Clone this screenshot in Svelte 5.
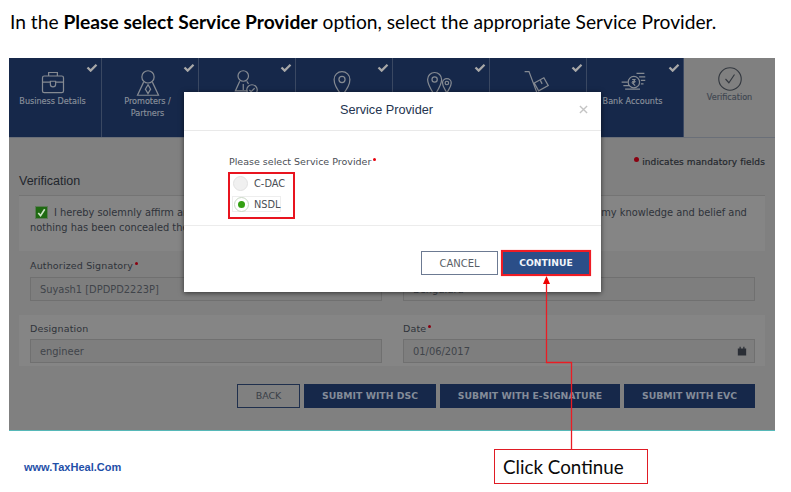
<script>
  const done = [
    { label: ['Business Details'], icon: 'case' },
    { label: ['Promoters /', 'Partners'], icon: 'person' },
    { label: [], icon: 'sign' },
    { label: [], icon: 'pin' },
    { label: [], icon: 'pins' },
    { label: [], icon: 'cart' },
    { label: ['Bank Accounts'], icon: 'bank' }
  ];
</script>

<div class="page">
  <p class="intro">In the <b>Please select Service Provider</b> option, select the appropriate Service Provider.</p>

  <div class="shot">
    <nav class="tabs">
      {#each done as t}
        <div class="tab">
          <svg class="tick" viewBox="0 0 12 10"><path d="M1 5l3.5 3.5L11 2" /></svg>
          <svg class="ico" viewBox="0 0 32 32">
            {#if t.icon === 'case'}
              <rect x="4" y="8" width="24" height="19" rx="2" />
              <path d="M11 8V4h10v4M4 15h9M19 15h9M13 14h6v3.500a3 3 0 0 1-6 0z" />
            {:else if t.icon === 'person'}
              <circle cx="16" cy="9" r="7" />
              <path d="M11 15L4 30h24l-7-15M16 18l-3 5 3 5 3-5z" />
            {:else if t.icon === 'sign'}
              <circle cx="14" cy="8" r="6" />
              <path d="M10 14L5 25h14M18 14l2 3M14 17v7" />
              <circle cx="24" cy="24" r="6" />
              <path d="M21 24l2 2 4-4" />
            {:else if t.icon === 'pin'}
              <path d="M16 31C10 22 7 18 7 12a9 9 0 0 1 18 0c0 6-3 10-9 19z" />
              <circle cx="16" cy="12" r="3.500" />
            {:else if t.icon === 'pins'}
              <path d="M11 30C6 22 3 18 3 12a8 8 0 0 1 16 0c0 6-3 10-8 18zM25 27c-3-5-5-7-5-11a5 5 0 0 1 10 0c0 4-2 6-5 11z" />
              <circle cx="11" cy="12" r="3" /><circle cx="25" cy="16" r="2" />
            {:else if t.icon === 'cart'}
              <path d="M3 3h5l9 24M14 16l11-6 5 9-11 6zM21 13l2 4" />
              <circle cx="18" cy="29" r="2" />
            {:else}
              <circle cx="17" cy="15" r="6.500" />
              <path d="M15 12h4M15 14.500h4M15.500 12c3 0 3 4 0 4l3 3M3 15h7M5 19h7M7 23h17M23 9h7M25 13h5M25 17h3M20 5h9" />
            {/if}
          </svg>
          <span class="tlabel">{#each t.label as l}<span>{l}</span>{/each}</span>
        </div>
      {/each}
      <div class="tab current">
        <svg class="ico big" viewBox="0 0 32 32">
          <circle cx="16" cy="16" r="15" />
          <path d="M10 16l4.500 5L22 10" />
        </svg>
        <span class="tlabel">Verification</span>
      </div>
    </nav>

    <div class="mand"><i></i>indicates mandatory fields</div>
    <h2>Verification</h2>

    <div class="declare">
      <div class="line"><span class="check"><svg viewBox="0 0 12 12"><path d="M2.500 6.500l2.500 3L9.500 2.500" /></svg></span><span>I hereby solemnly affirm and declare that the information given herein above is true and correct to the best of my knowledge and belief and</span></div>
      <div class="line2">nothing has been concealed therefrom.</div>
    </div>

    <div class="row plain">
      <div class="field"><label>Authorized Signatory<i></i></label><div class="input">Suyash1 [DPDPD2223P]</div></div>
      <div class="field"><label>Place<i></i></label><div class="input">Bengaluru</div></div>
    </div>
    <div class="row">
      <div class="field"><label>Designation</label><div class="input">engineer</div></div>
      <div class="field"><label>Date<i></i></label><div class="input">01/06/2017
        <svg class="cal" viewBox="0 0 12 12"><path d="M1 3h10v8.500H1zM3 1h1.500v2H3zM7.500 1H9v2H7.500z" /></svg></div></div>
    </div>

    <div class="actions">
      <span class="btn back">BACK</span>
      <span class="btn dsc">SUBMIT WITH DSC</span>
      <span class="btn esign">SUBMIT WITH E-SIGNATURE</span>
      <span class="btn evc">SUBMIT WITH EVC</span>
    </div>

    <div class="modal">
      <header><span>Service Provider</span><svg class="close" viewBox="0 0 10 10"><path d="M1 1l8 8M9 1l-8 8" /></svg></header>
      <div class="mbody">
        <div class="q">Please select Service Provider<i></i></div>
        <div class="opt"><span class="radio"></span>C-DAC</div>
        <div class="opt on"><span class="radio"><em></em></span>NSDL</div>
      </div>
      <footer>
        <span class="cancel">CANCEL</span>
        <span class="continue">CONTINUE</span>
      </footer>
    </div>
  </div>

  <div class="bottom">
    <a class="brand" href="#top">www.TaxHeal.Com</a>
    <div class="callout">Click Continue</div>
  </div>

  <div class="redbox"></div>
  <svg class="arrow" width="791" height="492" viewBox="0 0 791 492">
    <path d="M571.500 449V362.500H546.500V282" />
    <path class="head" d="M546.500 276l-3.500 8h7z" />
  </svg>
</div>

<style>
  :global(body) { margin: 0; background: #fff; }
  .page {
    position: relative; width: 791px; height: 492px; overflow: hidden;
    font-family: "DejaVu Sans", sans-serif; font-size: 10px; color: #2f333a;
  }
  .intro {
    margin: 0; height: 58px; box-sizing: border-box; padding: 9px 0 0 10px;
    font: 19.2px/26px Lato, "Open Sans", sans-serif; color: #000; white-space: nowrap;
  }
  .shot {
    position: relative; margin-left: 9px; width: 766px; height: 372px;
    background: #808080; border-bottom: 1px solid #56b8b8; box-sizing: content-box;
  }
  .tabs { display: flex; height: 79px; border-bottom: 1px solid #6a6f78; }
  .tab {
    position: relative; width: 97px; flex: none; box-sizing: border-box; background: #16284a;
    border-right: 1px solid #3a4862; display: flex; flex-direction: column; align-items: center;
    padding: 11px 5px 0 0; color: #8a919c; font-size: 8.100px;
  }
  .tab:first-child { width: 93px; }
  .tab .tick { position: absolute; top: 5px; right: 3px; width: 12px; height: 9px; fill: none; stroke: #a8a8a8; stroke-width: 2.500; }
  .ico { width: 28px; height: 28px; margin-bottom: -2px; fill: none; stroke: #858a92; stroke-width: 1.400; flex: none; }
  .tlabel { display: flex; flex-direction: column; align-items: center; line-height: 12px; white-space: nowrap; -webkit-text-stroke: .15px currentColor; }
  .tab.current { flex: 1; background: #808080; border-right: 0; color: #3f4650; padding: 9px 0 0; }
  .ico.big { width: 24px; height: 24px; margin-bottom: 0; stroke: #33383f; stroke-width: 1.500; }
  .mand { position: absolute; top: 99px; right: 10px; font-size: 9px; color: #23272d; white-space: nowrap; letter-spacing: .12px; -webkit-text-stroke: .2px #23272d; }
  .mand i { display: inline-block; width: 5px; height: 5px; border-radius: 50%; background: #8a0010; margin-right: 3px; vertical-align: 3px; }
  h2 {
    margin: 0 10px; padding: 35px 0 6px; height: 16px; box-sizing: content-box;
    font: 400 12.500px/16px "Liberation Sans", sans-serif; color: #22262d; border-bottom: 1px solid #747474;
  }
  .declare { margin: 0 10px; padding: 9px 11px 0; height: 46px; background: #858585; font-size: 9.850px; line-height: 15px; white-space: nowrap; overflow: hidden; }
  .line { display: flex; align-items: center; gap: 6px; padding-left: 5px; height: 15px; }
  .check { width: 11px; height: 11px; flex: none; background: #1f6a12; border: 1px solid #5d7a58; }
  .check svg { display: block; fill: none; stroke: #cfe6c8; stroke-width: 1.800; }
  .row { display: flex; gap: 21px; margin: 0 10px; background: #858585; }
  .row.plain { background: none; margin-top: 7px; height: 56px; padding: 1px 10px 0 11px; }
  .row.plain .input { margin-top: 4px; }
  .row:not(.plain) { height: 44px; padding: 7px 10px 0 11px; }
  .field { flex: 1; min-width: 0; }
  label { display: block; height: 14px; line-height: 14px; font-size: 9.500px; color: #2f333a; letter-spacing: .15px; }
  label i, .q i { display: inline-block; width: 3px; height: 3px; border-radius: 50%; background: #8a0010; margin-left: 2px; vertical-align: 4px; }
  .q i { background: #e8000c; }
  .input {
    position: relative; height: 24px; box-sizing: border-box; border: 1px solid #707070; background: #7e7e7e;
    margin-top: 3px; padding-left: 9px; line-height: 23px; color: #40444a; font-size: 9.900px;
  }
  .cal { position: absolute; right: 7px; top: 6px; width: 10px; height: 10px; fill: #2a2e35; }
  .actions { display: flex; justify-content: flex-end; gap: 4px; margin: 18px 20px 0 0; }
  .btn {
    height: 24px; box-sizing: border-box; line-height: 24px; text-align: center; background: #16284a;
    color: #848c99; font-size: 9.300px; font-weight: 700;
  }
  .back { width: 63px; background: none; border: 1px solid #1f2f4d; line-height: 22px; color: #3a3f47; font-weight: 400; font-size: 9.500px; }
  .dsc { width: 132px; }
  .esign { width: 180px; }
  .evc { width: 131px; }
  .modal {
    position: absolute; left: 175px; top: 34px; width: 417px; height: 200px;
    background: #fff; box-shadow: 0 1px 5px rgba(0,0,0,.6); display: flex; flex-direction: column;
  }
  header {
    position: relative; height: 38px; border-bottom: 1px solid #e9e9e9; text-align: center; padding-right: 12px;
    font: 12.700px/36px "Liberation Sans", sans-serif; color: #24344f;
  }
  .close { position: absolute; right: 13px; top: 13px; width: 9px; height: 9px; fill: none; stroke: #c4c4c4; stroke-width: 1.500; }
  .mbody { height: 95px; box-sizing: border-box; padding: 25px 0 0 45px; border-bottom: 1px solid #ececec; color: #4a4e55; font-size: 9.500px; }
  .q { height: 16px; line-height: 12px; }
  .opt { display: flex; align-items: center; gap: 6px; height: 22px; margin-left: 4px; font-size: 9.800px; }
  .opt.on { width: 49px; height: 16px; margin-top: 2px; margin-left: 3px; padding-left: 1px; gap: 5px; box-sizing: border-box; border: 1px solid #eee; }
  .radio { width: 13px; height: 13px; border-radius: 50%; border: 1px solid #e2e2e2; background: #f0f0f0; display: grid; place-items: center; flex: none; }
  .on .radio { background: #fff; border-color: #c9d8c5; }
  .radio em { width: 7px; height: 7px; border-radius: 50%; background: #34a012; }
  footer { display: flex; justify-content: flex-end; align-items: flex-start; gap: 3px; padding: 25px 10px 0 0; }
  .cancel, .continue { height: 24px; box-sizing: border-box; text-align: center; line-height: 23px; }
  .cancel { width: 77px; border: 1px solid #6c7a92; color: #5a5f68; font-size: 10px; }
  .continue { width: 90px; background: #2b4e88; color: #f2f5fa; font-weight: 700; font-size: 9.200px; border: 2px solid #ee1c25; line-height: 22px; height: 26px; margin-top: -1px; box-shadow: 0 0 1px #f88; }
  .bottom { position: relative; display: flex; justify-content: space-between; align-items: flex-start; padding: 18px 143px 0 24px; }
  .brand { margin-top: 11px; font: 700 11px/14px "Liberation Sans", sans-serif; color: #1f4fa8; text-decoration: none; }
  .callout {
    width: 154px; height: 35px; box-sizing: border-box; border: 1px solid #e01b24; background: #fff;
    padding-left: 8px; font: 18.800px/33px Lato, sans-serif; color: #0a0a0a;
  }
  .redbox { position: absolute; left: 228px; top: 172px; width: 67px; height: 47px; box-sizing: border-box; border: 2px solid #e8141f; }
  .arrow { position: absolute; left: 0; top: 0; pointer-events: none; fill: none; stroke: #ea1c24; stroke-width: 1.300; }
  .arrow .head { fill: #ee0000; stroke: none; }
</style>
